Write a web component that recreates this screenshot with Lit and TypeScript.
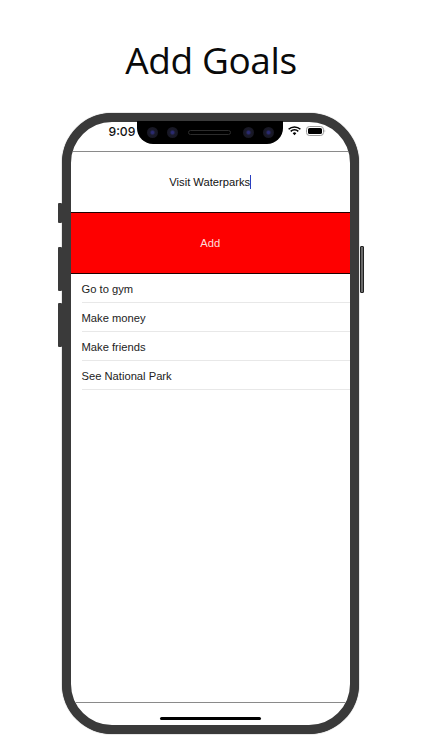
import { LitElement, html, css } from "lit";
import { customElement } from "lit/decorators.js";

const GOALS = ["Go to gym", "Make money", "Make friends", "See National Park"];

@customElement("app-root")
export class AppRoot extends LitElement {
  static styles = css`
    :host {
      display: block;
      width: 422px;
      height: 750px;
      overflow: hidden;
      background: #fff;
      font-family: "Liberation Sans", Arial, sans-serif;
      color: #111;
    }
    .title {
      margin: 0;
      height: 112.5px;
      box-sizing: border-box;
      padding-top: 34px;
      text-align: center;
      font: 400 37px/52px "Open Sans", "Liberation Sans", sans-serif;
      letter-spacing: -0.4px;
      color: #0a0a0a;
    }
    .phone {
      position: relative;
      box-sizing: border-box;
      width: 297.5px;
      height: 621px;
      margin-left: 61.5px;
      border: 9px solid #3a3a3a;
      border-radius: 50px;
      box-shadow: 0 0 1px #111;
      background: #fff;
    }
    .side {
      position: absolute;
      width: 3.5px;
      background: #3a3a3a;
      border-radius: 1px;
    }
    .mute { left: -12.5px; top: 81.5px; height: 20px; }
    .up { left: -12.5px; top: 125.5px; height: 44px; }
    .down { left: -12.5px; top: 181px; height: 44px; }
    .power {
      right: -14px;
      top: 124.5px;
      height: 45px;
      width: 2.5px;
      background: #6a6a6a;
      border: 0.5px solid #222;
    }
    .screen {
      height: 100%;
      display: flex;
      flex-direction: column;
      overflow: hidden;
      border-radius: 41px;
    }
    .status {
      flex: none;
      height: 30px;
      box-sizing: border-box;
      padding: 0 24px 10px 38px;
      display: flex;
      align-items: center;
      justify-content: space-between;
      border-bottom: 1px solid #8a8a8a;
      font-family: Inter, "Liberation Sans", sans-serif;
      font-size: 12.2px;
      font-weight: 500;
    }
    .indicators { display: flex; align-items: center; gap: 5px; }
    .notch {
      position: absolute;
      left: 66.5px;
      top: -1px;
      width: 146px;
      height: 23.5px;
      background: #000;
      border-radius: 0 0 16px 16px;
      display: flex;
      align-items: center;
      justify-content: center;
    }
    .lens {
      width: 11px;
      height: 11px;
      border-radius: 50%;
      background: radial-gradient(circle, #2a2a70 0 15%, #1a1a2a 35%, #14141c 100%);
    }
    .lens + .lens { margin-left: 9px; }
    .speaker {
      box-sizing: border-box;
      width: 43px;
      height: 5px;
      margin: 0 11.5px 0 10.5px;
      border: 1px solid #2c2c2c;
      border-radius: 3px;
    }
    .input {
      flex: none;
      height: 60px;
      display: flex;
      align-items: center;
      justify-content: center;
      font-size: 11.2px;
    }
    .caret {
      display: inline-block;
      width: 1px;
      height: 14px;
      background: #2a3fc0;
      vertical-align: -3px;
    }
    .add {
      flex: none;
      height: 62.5px;
      box-sizing: border-box;
      display: flex;
      align-items: center;
      justify-content: center;
      background: #fe0000;
      border-top: 1.5px solid #200000;
      border-bottom: 1.5px solid #200000;
      color: #ffd9d9;
      font-size: 11.2px;
    }
    .list { margin: 0; padding: 0 0 0 11px; list-style: none; flex: none; }
    .list li {
      height: 29px;
      box-sizing: border-box;
      padding-top: 1px;
      display: flex;
      align-items: center;
      border-bottom: 1px solid #e8e8e8;
      font-size: 11.2px;
      color: #222;
    }
    .spacer { flex: 1; }
    .bottom {
      flex: none;
      height: 23px;
      border-top: 1px solid #8a8a8a;
      display: flex;
      align-items: flex-start;
      justify-content: center;
      padding-top: 14px;
      box-sizing: border-box;
    }
    .home { width: 101px; height: 3px; border-radius: 2px; background: #000; }
  `;

  render() {
    return html`
      <h1 class="title">Add Goals</h1>
      <div class="phone">
        <div class="side mute"></div>
        <div class="side up"></div>
        <div class="side down"></div>
        <div class="side power"></div>
        <div class="screen">
          <div class="status">
            <span>9:09</span>
            <div class="indicators">
              <svg width="13" height="10" viewBox="0 0 13 10" aria-hidden="true">
                <path d="M.6 3.3a8.4 8.4 0 0 1 11.8 0" fill="none" stroke="#000" stroke-width="1.5"/>
                <path d="M2.7 5.4a5.4 5.4 0 0 1 7.6 0" fill="none" stroke="#000" stroke-width="1.5"/>
                <path d="M4.7 7.2a2.6 2.6 0 0 1 3.6 0L6.5 9.2z" fill="#000"/>
              </svg>
              <svg width="20" height="10" viewBox="0 0 20 10" aria-hidden="true">
                <rect x=".5" y=".5" width="17" height="9" rx="3" fill="none" stroke="#999"/>
                <rect x="2" y="2" width="14" height="6" rx="1.6" fill="#000"/>
                <path d="M18.6 3.4c.8.3.8 2.9 0 3.2z" fill="#999"/>
              </svg>
            </div>
          </div>
          <div class="input"><span>Visit Waterparks<span class="caret"></span></span></div>
          <div class="add">Add</div>
          <ul class="list">
            ${GOALS.map((g) => html`<li>${g}</li>`)}
          </ul>
          <div class="spacer"></div>
          <div class="bottom"><div class="home"></div></div>
        </div>
        <div class="notch">
          <span class="lens"></span><span class="lens"></span><span class="speaker"></span><span class="lens"></span><span class="lens"></span>
        </div>
      </div>
    `;
  }
}
